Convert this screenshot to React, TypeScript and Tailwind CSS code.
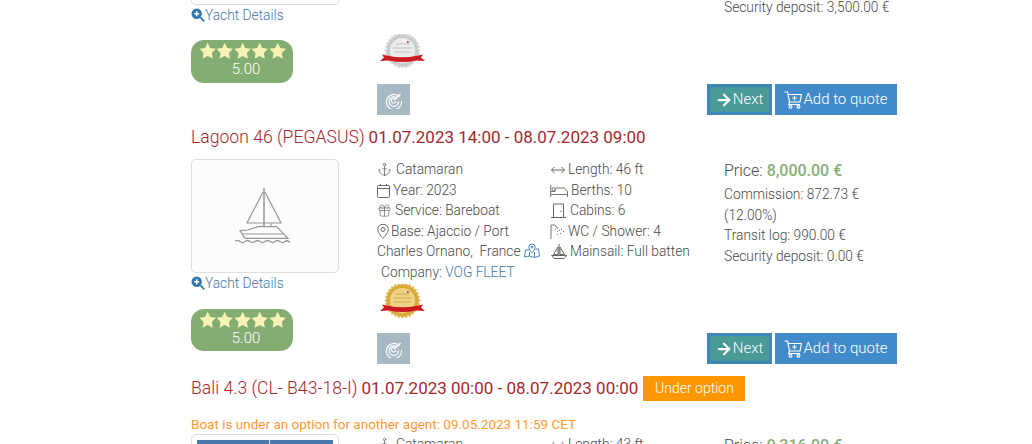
import React from "react";
import { Anchor, Gift, ArrowRight } from "lucide-react";

function Star() {
  return (
    <svg width="17.400" height="17" viewBox="0 0 24 23" className="shrink-0">
      <path d="M12 .8l3.5 7.3 7.9 1.1-5.7 5.6 1.4 8-7.1-3.8-7.1 3.800 1.400-8L.6 9.2l7.900-1.100z" fill="#f6f3b4" />
    </svg>
  );
}

function Pill({ h }: { h: string }) {
  return (
    <div className={`w-[102px] ${h} rounded-[13px] bg-[#83ad72] flex flex-col items-center pt-[2px] text-white`}>
      <div className="flex h-[17px] items-center ml-[1px]">
        <Star /><Star /><Star /><Star /><Star />
      </div>
      <div className="text-[15px] leading-[20px] font-light ml-[8px]">5.00</div>
    </div>
  );
}

function Details() {
  return (
    <div className="flex h-[20px] items-center text-[13.750px] font-light text-[#3f78a8]">
      <svg width="14" height="14" viewBox="0 0 14 14">
        <circle cx="5.7" cy="5.7" r="5.2" fill="#2f78b5" />
        <path d="M9.4 9.4L13.3 13.3" stroke="#2f78b5" strokeWidth="1.8" />
        <path d="M3.2 5.7h5M5.7 3.2v5" stroke="#fff" strokeWidth="1.6" />
      </svg>
      <span>Yacht Details</span>
    </div>
  );
}

function Seal({ gold }: { gold?: boolean }) {
  const rim = gold ? "#e6bb55" : "#d8d8d8";
  const face = gold ? "#d9a93c" : "#c9cbce";
  const inner = gold ? "#efd488" : "#eceded";
  const dots = Array.from({ length: 28 }, (_, i) => {
    const a = (i / 28) * Math.PI * 2;
    return <circle key={i} cx={22.5 + 16.4 * Math.cos(a)} cy={16.5 + 16.4 * Math.sin(a)} r="1.4" fill={rim} />;
  });
  return (
    <svg width="46" height="36" viewBox="0 0 46 36" className="ml-[3px]">
      {dots}
      <circle cx="22.5" cy="16.5" r="16" fill={face} />
      <circle cx="22.5" cy="16.5" r="12.5" fill={inner} />
      <path d="M16 10h13M13 14h19M14 18h17" stroke={gold ? "#b98a2c" : "#a5a5a8"} strokeWidth="1" opacity="0.6" />
      <path d="M27 7l3 1-3 1z" fill="#c8202a" />
      <path d="M0 27l4-3.5-2-3 6 1.300q14 3 29 0l6-1.300-2 3 4 3.500-9-.5q-13 3-27 0z" fill="#cc1a22" />
    </svg>
  );
}

function Boat() {
  return (
    <svg width="62" height="60" viewBox="0 0 62 60" fill="none" stroke="#98989b" strokeWidth="1.200">
      <path d="M30 2v39" strokeWidth="1.500" />
      <path d="M29 6L13 37h34L31 6" />
      <path d="M6 44.700L14 44 24 40.700H42.700L54 52.300H11z" />
      <path d="M9 48h40M37 37.500v3.500" />
      <path d="M1 55q2.500-1.500 5 .5t5 0 5 0 5 0 5 0 5 0 5 0 5 0 5 0 5 0 5 1" strokeWidth="1.300" />
    </svg>
  );
}

function TargetBtn() {
  return (
    <div className="w-[33px] h-[31px] bg-[#a9b9c4] flex items-center justify-center">
      <svg width="18" height="18" viewBox="0 0 18 18" fill="none" stroke="#fff" strokeWidth="1.100">
        <path d="M14.500 5.800A7.600 7.600 0 1 0 16.500 10" />
        <path d="M12 7a4.800 4.800 0 1 0 1.600 3.500" />
        <path d="M9.800 7.200A2.500 2.500 0 1 0 11.300 10" />
        <path d="M8.800 9.200L15.500 3" strokeWidth="1.500" />
      </svg>
    </div>
  );
}

function CartIcon() {
  return (
    <svg width="18" height="18" viewBox="0 0 18 18" fill="none" stroke="#fff" strokeWidth="1.200" className="shrink-0">
      <path d="M.5 1h3l2 10h10.500l1.500-7.500H4" />
      <path d="M5.500 11l-.8 2.500H16" />
      <path d="M10.500 4.800v4.500M8.200 7h4.600" />
      <circle cx="6.500" cy="15.700" r="1.400" />
      <circle cx="14.500" cy="15.700" r="1.400" />
    </svg>
  );
}

function Footer() {
  return (
    <div className="flex items-start justify-between h-[31px]">
      <TargetBtn />
      <div className="flex gap-[3px] text-white">
        <div className="w-[65px] h-[31px] bg-[#4a9a97] border-[3px] border-[#3f87b8] flex items-center justify-center font-light text-[15px]">
          <ArrowRight size={18} strokeWidth={3} className="-ml-[1px]" />
          <span>Next</span>
        </div>
        <div className="w-[122px] h-[31px] bg-[#428bca] flex items-center justify-center font-light text-[15px]">
          <CartIcon />
          <span className="ml-px">Add to quote</span>
        </div>
      </div>
    </div>
  );
}

function Row({ w, icon, children }: { w: string; icon: React.ReactNode; children: React.ReactNode }) {
  return (
    <div>
      <span className={`inline-flex ${w} align-[-3px]`}>{icon}</span>
      {children}
    </div>
  );
}

function CalendarIcon() {
  return (
    <svg width="13" height="15" viewBox="0 0 13 15" fill="none" stroke="#666" strokeWidth="1">
      <rect x="0.500" y="2.500" width="12" height="12" rx="1" />
      <path d="M.5 5.500h12M3.500 1v2M9.500 1v2" />
    </svg>
  );
}
function PinIcon() {
  return (
    <svg width="12" height="15" viewBox="0 0 12 15" fill="none" stroke="#666" strokeWidth="1">
      <path d="M6 14.300S.7 9 .7 5.500a5.300 5.300 0 0 1 10.600 0C11.300 9 6 14.300 6 14.300z" />
      <circle cx="6" cy="5.500" r="2" />
    </svg>
  );
}
function ArrowsIcon() {
  return (
    <svg width="14" height="15" viewBox="0 0 14 15" fill="none" stroke="#666" strokeWidth="1">
      <path d="M.5 8h13M3.500 5L.5 8l3 3M10.500 5l3 3-3 3" />
    </svg>
  );
}
function BedIcon() {
  return (
    <svg width="18" height="14" viewBox="0 0 18 14" fill="none" stroke="#777" strokeWidth="1">
      <path d="M.7 1v12M17.500 13V7.500L14.500 4H6L5 7.500H1M1 10.500h16.500" />
      <circle cx="3.500" cy="5" r="1.500" />
    </svg>
  );
}
function DoorIcon() {
  return (
    <svg width="15" height="15" viewBox="0 0 15 15" fill="none" stroke="#666" strokeWidth="1">
      <path d="M0 14.500h15M2.500 14.500V1h10v13.500M10 7.500v1.500" />
    </svg>
  );
}
function ShowerIcon() {
  return (
    <svg width="15" height="15" viewBox="0 0 15 15" fill="none" stroke="#777" strokeWidth="1">
      <path d="M1 15V1h4l2 3" />
      <path d="M5 6l4-3M7 7l1 1M9 6l1 1M11 5l1 1M7 10l1 1M10 9l1 1M13 7l1 1" strokeDasharray="1.500 1" />
    </svg>
  );
}
function SailIcon() {
  return (
    <svg width="16" height="15" viewBox="0 0 16 15" fill="none" stroke="#666" strokeWidth="1">
      <path d="M8 0v11M7 3L2.500 10.500H7zM9 3l4.500 7.500H9zM.5 11.500h15L13 14.500H3z" />
    </svg>
  );
}
function MapsIcon() {
  return (
    <svg width="16" height="15" viewBox="0 0 16 15" fill="none" stroke="#4a86b8" strokeWidth="1" className="inline-block align-[-2px]">
      <path d="M5 7H1.500L.5 14l5-1 5 1.500 5-1.500-1-7h-3M5.500 13V9M10.500 14V9" />
      <path d="M8 10S4.800 6.500 4.800 4.200a3.200 3.200 0 1 1 6.400 0C11.200 6.500 8 10 8 10z" />
      <circle cx="8" cy="4" r="1" />
    </svg>
  );
}

function Specs({
  price, commission, transit, deposit, length, berths, cabins, wc,
}: { price: string; commission: string; transit: string; deposit: string; length: string; berths: string; cabins: string; wc: string }) {
  return (
    <div className="grid grid-cols-[173px_174px_1fr] text-[13.750px] leading-[20.500px] font-light text-[#4a4a4a]">
      <div>
        <Row w="w-[19px]" icon={<Anchor size={15} strokeWidth={1.100} color="#555" />}>Catamaran</Row>
        <Row w="w-[16px]" icon={<CalendarIcon />}>Year: 2023</Row>
        <Row w="w-[18px]" icon={<Gift size={15} strokeWidth={1} color="#555" />}>Service: Bareboat</Row>
        <Row w="w-[14px]" icon={<PinIcon />}>Base: Ajaccio / Port Charles Ornano,&nbsp; France <MapsIcon /></Row>
        <div className="pl-[4px]">Company: <span className="text-[#3f78a8]">VOG FLEET</span></div>
      </div>
      <div>
        <Row w="w-[18px] pl-[1px]" icon={<ArrowsIcon />}>Length: {length}</Row>
        <Row w="w-[21px]" icon={<BedIcon />}>Berths: {berths}</Row>
        <Row w="w-[20px] pl-[1px]" icon={<DoorIcon />}>Cabins: {cabins}</Row>
        <Row w="w-[18px]" icon={<ShowerIcon />}>WC / Shower: {wc}</Row>
        <Row w="w-[20px] pl-[1px]" icon={<SailIcon />}>Mainsail: Full batten</Row>
      </div>
      <div className="pr-[20px]">
        <div className="text-[16px] leading-[23px] pb-[2px]">Price: <span className="font-medium text-[#8aac78]">{price}</span></div>
        <div>Commission: {commission} (12.00%)</div>
        <div>Transit log: {transit}</div>
        <div>Security deposit: {deposit}</div>
      </div>
    </div>
  );
}

function ImageBox({ children }: { children: React.ReactNode }) {
  return (
    <div className="w-[148px] h-[114px] border border-[#dedede] rounded-[5px] bg-[#fcfcfd] flex items-center justify-center">
      {children}
    </div>
  );
}

function Title({ name, dates }: { name: string; dates: string }) {
  return (
    <div className="leading-[25px] text-[#a5282c] whitespace-nowrap">
      <span className="font-light text-[17.600px]">{name}</span> <span className="text-[17px]">{dates}</span>
    </div>
  );
}

export default function App() {
  return (
    <div className="h-[444px] overflow-hidden bg-white font-['Roboto',sans-serif]">
      <div className="w-[706px] ml-[191px]">
        {/* tail of the first result */}
        <div className="flex h-[115px]">
          <div className="w-[186px] shrink-0">
            <div className="w-[148px] h-[5px] border border-t-0 border-[#dedede] rounded-b-[5px]" />
            <Details />
            <div className="mt-[15px]"><Pill h="h-[43px]" /></div>
          </div>
          <div className="flex-1 flex flex-col">
            <div className="grid grid-cols-[347px_1fr] text-[13.750px] leading-[20px] font-light text-[#4a4a4a] -mt-[3px]">
              <div />
              <div>Security deposit: 3,500.00 €</div>
            </div>
            <div className="mt-[17px]"><Seal /></div>
            <div className="mt-[14px]"><Footer /></div>
          </div>
        </div>

        {/* Lagoon 46 */}
        <div className="mt-[10px]"><Title name="Lagoon 46 (PEGASUS)" dates="01.07.2023 14:00 - 08.07.2023 09:00" /></div>
        <div className="flex mt-[9px]">
          <div className="w-[186px] shrink-0">
            <ImageBox><Boat /></ImageBox>
            <Details />
            <div className="mt-[16px]"><Pill h="h-[42px]" /></div>
          </div>
          <div className="flex-1">
            <div className="h-[124px]">
              <Specs price="8,000.00 €" commission="872.73 €" transit="990.00 €" deposit="0.00 €" length="46 ft" berths="10" cabins="6" wc="4" />
            </div>
            <div className="mt-[1px]"><Seal gold /></div>
            <div className="mt-[13px]"><Footer /></div>
          </div>
        </div>

        {/* Bali 4.3 */}
        <div className="flex items-center gap-[5px] mt-[12px] h-[25px]">
          <Title name="Bali 4.3 (CL- B43-18-I)" dates="01.07.2023 00:00 - 08.07.2023 00:00" />
          <div className="w-[102px] h-[25px] bg-[#ff9800] text-white text-[14px] font-light flex items-center justify-center">Under option</div>
        </div>
        <div className="mt-[13px] h-[20px] text-[13.500px] leading-[20px] text-[#ff9933]">Boat is under an option for another agent: 09.05.2023 11:59 CET</div>
        <div className="flex">
          <div className="w-[186px] shrink-0">
            <div className="w-[148px] h-[114px] border border-[#dedede] rounded-[5px] p-[5px]">
              <div className="h-full bg-[#4a78ad] flex">
                <div className="w-[73px] border-r border-[#cfd8e4]" />
              </div>
            </div>
          </div>
          <div className="flex-1">
            <Specs price="9,316.00 €" commission="0.00 €" transit="0.00 €" deposit="0.00 €" length="43 ft" berths="10" cabins="4" wc="4" />
          </div>
        </div>
      </div>
    </div>
  );
}
